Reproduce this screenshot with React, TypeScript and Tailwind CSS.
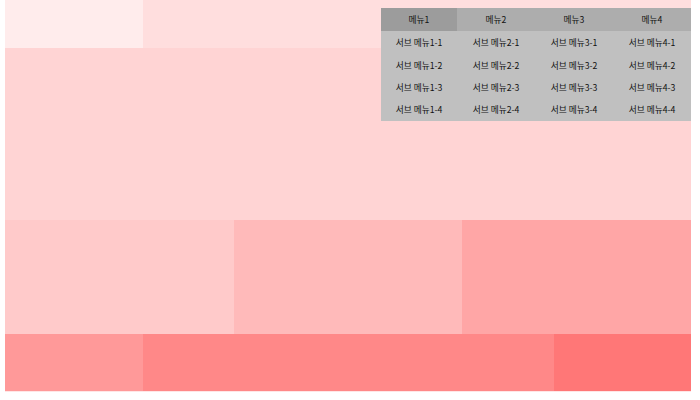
import React from "react";

const menus = [1, 2, 3, 4];
const subs = [1, 2, 3, 4];

export default function App() {
  return (
    <div className="w-[700px] h-[400px] bg-white">
      <div className="relative ml-[5px] w-[686px] h-[392px] bg-[#ffe6e6] flex flex-col">
        <div className="flex h-[48px]">
          <div className="w-[138px] bg-[#ffecec]" />
          <div className="flex-1 bg-[#ffdede]" />
        </div>
        <div className="h-[172px] bg-[#ffd4d4]" />
        <div className="grid grid-cols-3 h-[114px]">
          <div className="bg-[#ffcaca]" />
          <div className="bg-[#ffbaba]" />
          <div className="bg-[#ffa6a6]" />
        </div>
        <div className="flex h-[57px]">
          <div className="w-[138px] bg-[#ff9999]" />
          <div className="flex-1 bg-[#ff8888]" />
          <div className="w-[137px] bg-[#ff7777]" />
        </div>

        <div
          className="absolute right-0 top-[8px] w-[310px] grid grid-cols-[76px_78px_78px_78px] text-[8.7px] text-[#111]"
          style={{ fontFamily: '"Noto Sans CJK KR", "Noto Sans", sans-serif' }}
        >
          {menus.map((m) => (
            <div key={m} className="flex flex-col">
              <div
                className={
                  (m === 1 ? "bg-[#9c9c9c]" : "bg-[#adadad]") +
                  " h-[23px] flex items-center justify-center"
                }
              >
                메뉴{m}
              </div>
              <div className="bg-[#c0c0c0] flex flex-col">
                {subs.map((s) => (
                  <div
                    key={s}
                    className={
                      (s <= 2 ? "h-[23px]" : "h-[22px]") +
                      " flex items-center justify-center"
                    }
                  >
                    서브 메뉴{m}-{s}
                  </div>
                ))}
              </div>
            </div>
          ))}
        </div>
      </div>
    </div>
  );
}
